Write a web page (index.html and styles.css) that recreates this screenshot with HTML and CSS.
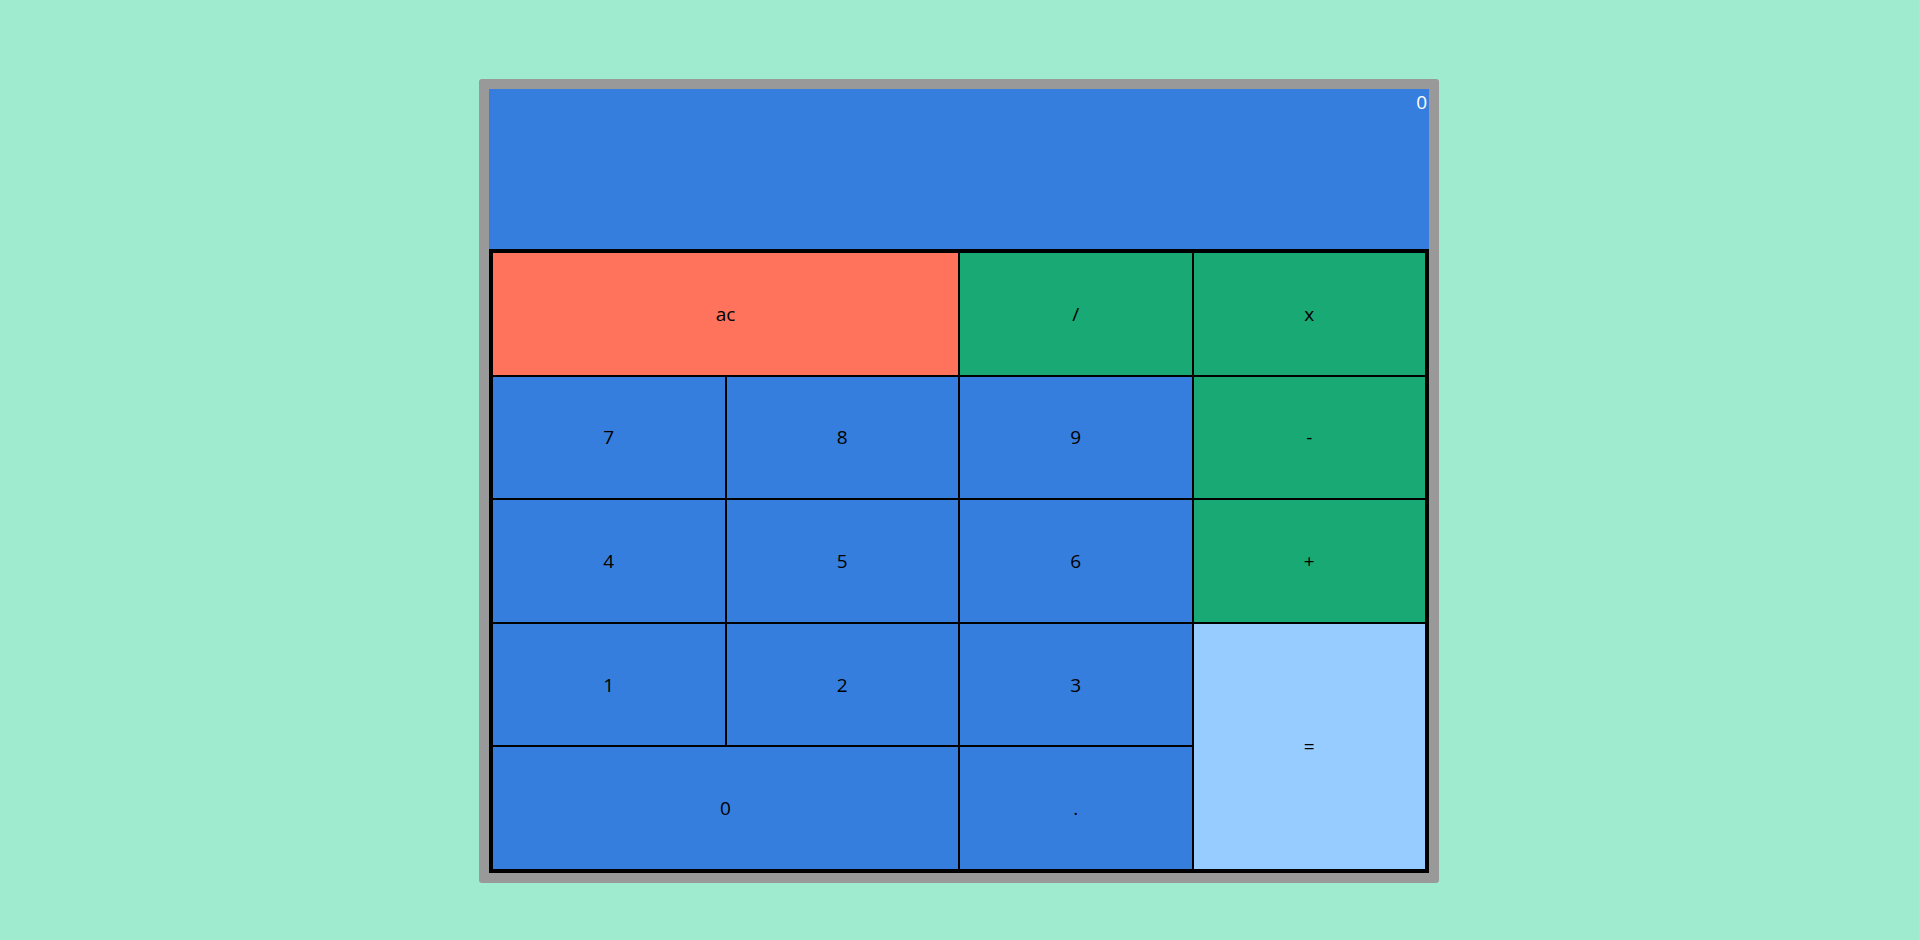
FILE: index.html
```html
<!DOCTYPE html>
<html lang="en">
<head>
    <meta charset="UTF-8">
    <title>Calculator</title>
    <link rel="stylesheet" href="styles.css">
</head>
<body>
    <div class="calculator">
        <div class="display">0</div>
        <div class="keys">
            <button class="key clear wide">ac</button>
            <button class="key op">/</button>
            <button class="key op">x</button>
            <button class="key">7</button>
            <button class="key">8</button>
            <button class="key">9</button>
            <button class="key op">-</button>
            <button class="key">4</button>
            <button class="key">5</button>
            <button class="key">6</button>
            <button class="key op">+</button>
            <button class="key">1</button>
            <button class="key">2</button>
            <button class="key">3</button>
            <button class="key equals tall">=</button>
            <button class="key wide">0</button>
            <button class="key">.</button>
        </div>
    </div>
</body>
</html>
```

FILE: styles.css
```css
body {
    margin: 0;
    background-color: #9eebcf;
    font-family: 'Open Sans', 'Noto Sans', sans-serif;
    display: flex;
    justify-content: center;
    align-items: flex-start;
    padding: 79px 1px 0 0;
    height: 940px;
    box-sizing: border-box;
}
.calculator {
    width: 960px;
    box-sizing: border-box;
    border: 10px solid #999;
    border-radius: 3px;
    background: #357edd;
}
.display {
    height: 160px;
    color: white;
    font-size: 19px;
    text-align: right;
    padding-right: 2px;
    line-height: 26px;
}
.keys {
    display: grid;
    grid-template-columns: repeat(4, 1fr);
    grid-template-rows: repeat(5, 1fr);
    height: 624px;
    box-sizing: border-box;
    border: 3px solid black;
}
.key {
    font-family: inherit;
    font-size: 19px;
    color: black;
    background: #357edd;
    border: 1px solid black;
    margin: 0;
    padding: 0;
    cursor: pointer;
}
.wide { grid-column: span 2; }
.tall { grid-row: span 2; }
.clear { background: #ff725c; }
.op { background: #19a974; }
.equals { background: #96ccff; }
```
